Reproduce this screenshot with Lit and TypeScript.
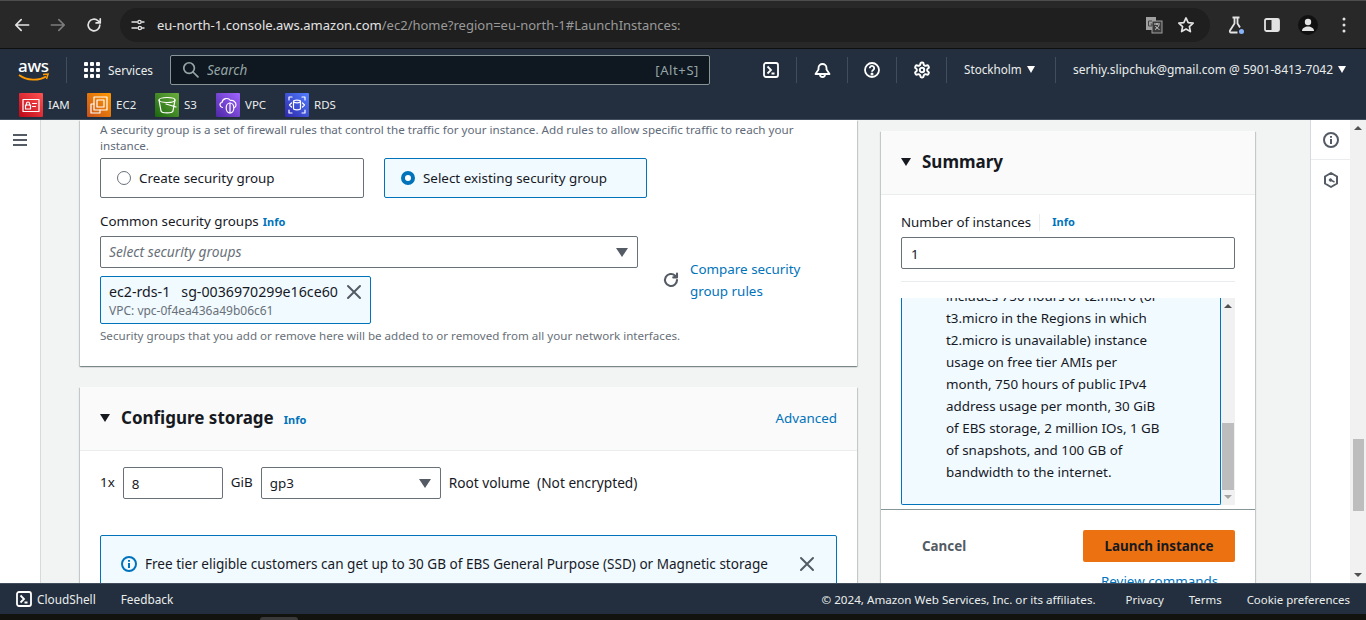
import { LitElement, html, css, svg } from 'lit';
import { customElement } from 'lit/decorators.js';

const stroke = (w: number, size: number, body: unknown, box = 24) => html`<svg
  width=${size}
  height=${size}
  viewBox="0 0 ${box} ${box}"
  fill="none"
  stroke="currentColor"
  stroke-width=${w}
  stroke-linecap="round"
  stroke-linejoin="round"
>${body}</svg>`;

const closeIcon = stroke(2, 16, svg`<path d="M2 2l12 12M14 2L2 14" />`, 16);
const caret = html`<span class="caret"></span>`;

const favourites = [
  {
    name: 'IAM',
    tone: 'iam',
    width: 68,
    icon: svg`<rect x="4" y="6.5" width="16" height="12" /><rect x="6.500" y="12" width="5" height="4" /><path d="M7.500 12v-1.500a1.500 1.500 0 0 1 3 0V12M13.500 10.500h4M13.500 13.500h3" />`,
  },
  {
    name: 'EC2',
    tone: 'ec2',
    width: 68,
    icon: svg`<rect x="7" y="4" width="13" height="13" /><rect x="10" y="7" width="7" height="7" /><path d="M7 11H4v9h9v-3" />`,
  },
  {
    name: 'S3',
    tone: 's3',
    width: 61,
    icon: svg`<ellipse cx="12" cy="7" rx="8" ry="2.500" /><path d="M4 7l2 11c1 2.500 11 2.500 12 0l2-11M11 11l10 3" />`,
  },
  {
    name: 'VPC',
    tone: 'vpc',
    width: 69,
    icon: svg`<path d="M6.500 14.500C3.500 14 3 10 6 9.500 6.500 5.500 12 4 14.500 7.500c3-.5 5.500 1.500 5.500 4.500 0 1-.5 2-1.500 2.500" /><ellipse cx="14" cy="15" rx="3.800" ry="5" /><path d="M14 10v10" />`,
  },
  {
    name: 'RDS',
    tone: 'rds',
    width: 60,
    icon: svg`<path d="M4 7V4h3M17 4h3v3M4 17v3h3M20 17v3h-3M6.500 10l-2 2 2 2M17.500 10l2 2-2 2" /><ellipse cx="12" cy="8.500" rx="3.500" ry="1.300" /><path d="M8.500 8.500v7c0 1.700 7 1.700 7 0v-7" />`,
  },
];

@customElement('app-root')
export class AppRoot extends LitElement {
  static styles = css`
    :host {
      display: block;
      width: 100%;
      height: 620px;
      overflow: hidden;
      font-family: 'Noto Sans', sans-serif;
      color: #16191f;
    }

    svg {
      display: block;
      flex: none;
    }

    a {
      color: #0073bb;
      text-decoration: none;
    }

    .page {
      display: flex;
      flex-direction: column;
      height: 620px;
    }

    /* browser toolbar */
    .chrome {
      flex: none;
      height: 47px;
      display: flex;
      align-items: center;
      background: #282828;
      border-top: 1px solid #4d4d4d;
      border-bottom: 1px solid #0f0f0f;
      color: #e3e3e3;
    }

    .chrome-nav {
      display: flex;
      gap: 16px;
      padding-left: 12px;
      width: 120px;
      box-sizing: border-box;
    }

    .dim {
      color: #7c7c7c;
    }

    .omnibox {
      width: 1090px;
      height: 34px;
      border-radius: 17px;
      background: #1f1f1f;
      display: flex;
      align-items: center;
      padding: 0 8px 0 9px;
      box-sizing: border-box;
    }

    .url {
      margin-left: 10px;
      font-size: 13px;
      color: #e3e3e3;
      flex: 1;
    }

    .url span {
      color: #9a9a9a;
    }

    .omni-icons {
      display: flex;
      gap: 13px;
      align-items: center;
      padding-right: 6px;
    }

    .chrome-right {
      display: grid;
      grid-template-columns: repeat(4, 36px);
      justify-items: center;
      align-items: center;
      margin-left: 8px;
    }

    .avatar {
      width: 20px;
      height: 20px;
      border-radius: 50%;
      background: #111;
      display: flex;
      align-items: center;
      justify-content: center;
    }

    /* console nav */
    .nav {
      flex: none;
      height: 71px;
      background: #232f3e;
      border-bottom: 1px solid #414d5c;
      box-sizing: border-box;
      color: #eaeded;
      font-size: 11.800px;
    }

    .nav-top {
      height: 41px;
      display: flex;
      align-items: center;
    }

    .logo {
      width: 48px;
      margin-left: 18px;
      height: 28px;
    }

    .logo b {
      font-size: 17px;
      font-weight: 500;
      line-height: 19px;
      color: #fff;
      display: block;
      letter-spacing: -0.3px;
    }

    .logo svg {
      margin-top: -2px;
    }

    .vline {
      width: 1px;
      height: 26px;
      background: #414d5c;
      flex: none;
    }

    .services {
      display: flex;
      align-items: center;
      gap: 8px;
      margin-left: 17px;
      width: 86px;
    }

    .grid {
      display: grid;
      grid-template-columns: repeat(3, 4px);
      gap: 2px;
    }

    .grid i {
      width: 4px;
      height: 4px;
      background: #fff;
      border-radius: 1px;
    }

    .search {
      width: 540px;
      height: 30px;
      box-sizing: border-box;
      border: 1px solid #879596;
      border-radius: 2px;
      background: #0f1720;
      display: flex;
      align-items: center;
      padding: 0 10px 0 11px;
      gap: 8px;
      font-size: 13.500px;
      color: #95a5a6;
    }

    .search em {
      flex: 1;
    }

    .search span {
      font-size: 13px;
      letter-spacing: 0.6px;
    }

    .nav-icons {
      display: flex;
      align-items: center;
      margin-left: 36px;
    }

    .nav-icon {
      width: 50px;
      display: flex;
      justify-content: center;
    }

    .nav-icon.w48 {
      width: 48px;
    }

    .nav-icon.w49 {
      width: 49px;
    }

    .menu {
      display: flex;
      align-items: center;
      gap: 5px;
      padding-bottom: 1px;
    }

    .region {
      margin-left: 17px;
      width: 91px;
      font-size: 11.700px;
    }

    .account {
      margin-left: 17px;
      font-size: 12px;
      white-space: nowrap;
    }

    .tri {
      width: 0;
      height: 0;
      border-left: 4.500px solid transparent;
      border-right: 4.500px solid transparent;
      border-top: 7px solid #fff;
    }

    .favs {
      display: flex;
      align-items: center;
      padding-left: 19px;
      height: 29px;
      font-size: 11.500px;
    }

    .fav {
      display: flex;
      align-items: center;
      gap: 5px;
    }

    .fav-icon {
      width: 24px;
      height: 24px;
      color: #fff;
      border-radius: 1px;
    }

    .iam { background: linear-gradient(45deg, #bd0816, #ff5252); }
    .ec2 { background: linear-gradient(45deg, #c8511b, #ff9900); }
    .s3 { background: linear-gradient(45deg, #1b660f, #6cae3e); }
    .vpc { background: linear-gradient(45deg, #4d27a8, #a166ff); }
    .rds { background: linear-gradient(45deg, #2e27ad, #527fff); }

    /* console body */
    .body {
      flex: 1;
      min-height: 0;
      display: flex;
      overflow: hidden;
      background: #f2f3f3;
    }

    .sidenav {
      width: 41px;
      flex: none;
      box-sizing: border-box;
      background: #fff;
      border-right: 1px solid #d5dbdb;
      padding: 14px 0 0 13px;
      color: #545b64;
    }

    .main {
      flex: 1;
      min-width: 0;
      display: flex;
      gap: 24px;
      padding-left: 39px;
      align-items: flex-start;
    }

    .col-left {
      width: 777px;
      flex: none;
    }

    .card {
      background: #fff;
      box-shadow: 0 1px 1px 0 rgba(0, 28, 36, 0.3), 1px 1px 1px 0 rgba(0, 28, 36, 0.15),
        -1px 1px 1px 0 rgba(0, 28, 36, 0.15);
    }

    .sg-card {
      height: 246px;
      box-sizing: border-box;
      padding: 2px 20px 0;
    }

    .lead {
      margin: 0;
      font-size: 11.650px;
      line-height: 16px;
      color: #5f6b7a;
      width: 720px;
    }

    .radios {
      display: flex;
      gap: 20px;
      margin-top: 4px;
    }

    .radio {
      width: 264px;
      height: 40px;
      box-sizing: border-box;
      border: 1px solid #687078;
      border-radius: 2px;
      display: flex;
      align-items: center;
      padding-left: 16px;
      gap: 8px;
      font-size: 13.400px;
    }

    .radio.on {
      width: 263px;
      border-color: #0073bb;
      background: #f1faff;
    }

    .dot {
      width: 14px;
      height: 14px;
      box-sizing: border-box;
      border-radius: 50%;
      border: 1px solid #687078;
      background: #fff;
    }

    .on .dot {
      border: 4px solid #0073bb;
    }

    .label {
      margin-top: 14px;
      font-size: 13.400px;
      line-height: 18px;
      display: flex;
      gap: 4px;
      align-items: baseline;
    }

    .info {
      font-size: 11px;
      font-weight: 700;
      color: #0073bb;
    }

    .sg-row {
      display: flex;
    }

    .sg-pick {
      width: 538px;
      flex: none;
    }

    .select {
      box-sizing: border-box;
      border: 1px solid #687078;
      border-radius: 2px;
      background: #fff;
      display: flex;
      align-items: center;
      justify-content: space-between;
      font-size: 13.400px;
      padding: 0 9px 0 8px;
    }

    .sg-select {
      height: 32px;
      margin-top: 5px;
    }

    .sg-select em {
      color: #687078;
      font-size: 13.800px;
      margin-bottom: 1px;
    }

    .caret {
      width: 0;
      height: 0;
      border-left: 6px solid transparent;
      border-right: 6px solid transparent;
      border-top: 9px solid #545b64;
    }

    .token {
      width: 271px;
      height: 48px;
      box-sizing: border-box;
      margin-top: 8px;
      border: 1px solid #0073bb;
      border-radius: 2px;
      background: #f1faff;
      padding: 5px 8px 0;
    }

    .token-top {
      display: flex;
      align-items: center;
      justify-content: space-between;
      font-size: 14.200px;
      line-height: 20px;
      color: #545b64;
    }

    .token-top span {
      color: #16191f;
      white-space: pre;
    }

    .token small {
      display: block;
      font-size: 12px;
      line-height: 16px;
      margin-top: 1px;
      color: #687078;
    }

    .compare {
      display: flex;
      align-items: center;
      align-self: flex-start;
      gap: 10px;
      margin: 27px 0 0 24px;
      font-size: 13.400px;
      line-height: 22px;
      color: #545b64;
    }

    .compare a {
      width: 125px;
    }

    .hint {
      margin: 4px 0 0;
      font-size: 11.600px;
      line-height: 16px;
      color: #687078;
    }

    .storage {
      margin-top: 21px;
      height: 400px;
    }

    .card-head {
      height: 64px;
      box-sizing: border-box;
      background: #fafafa;
      border-bottom: 1px solid #eaeded;
      display: flex;
      align-items: center;
      padding: 0 20px 2px;
    }

    .head-tri {
      width: 0;
      height: 0;
      border-left: 5.500px solid transparent;
      border-right: 5.500px solid transparent;
      border-top: 8px solid #16191f;
      margin-right: 11px;
    }

    .card-head h2 {
      margin: 0;
      font-size: 17px;
      font-weight: 700;
      line-height: 24px;
    }

    .card-head .info {
      margin-left: 10px;
      align-self: center;
      margin-top: 4px;
    }

    .card-head a {
      margin-left: auto;
      font-size: 13.400px;
    }

    .vol-row {
      display: flex;
      align-items: center;
      gap: 8px;
      margin: 16px 20px 0;
      font-size: 13.400px;
      height: 32px;
    }

    .vol-row > span {
      margin-bottom: 2px;
    }

    .vol-size {
      width: 100px;
      height: 32px;
      box-sizing: border-box;
      border: 1px solid #687078;
      border-radius: 2px;
      padding: 4px 8px 0;
      line-height: 24px;
    }

    .vol-type {
      width: 180px;
      height: 32px;
    }

    .vol-note {
      white-space: pre;
      font-size: 13.700px;
    }

    .alert {
      margin: 36px 20px 0;
      height: 120px;
      box-sizing: border-box;
      border: 1px solid #0073bb;
      border-radius: 2px;
      background: #f1faff;
      display: flex;
      align-items: flex-start;
      padding: 19px 21px 0 20px;
      font-size: 13.550px;
      line-height: 18px;
      gap: 8px;
    }

    .alert-icon {
      color: #0073bb;
      margin-top: 1px;
    }

    .alert-text {
      flex: 1;
      white-space: nowrap;
    }

    .alert-close {
      color: #545b64;
      margin-top: 1px;
    }

    /* summary */
    .summary {
      width: 374px;
      flex: none;
      margin-top: 11px;
      height: 470px;
    }

    .summary-body {
      padding: 0 20px;
    }

    .count-label {
      display: flex;
      align-items: center;
      margin-top: 18px;
      font-size: 13.300px;
      line-height: 18px;
    }

    .count-label i {
      width: 1px;
      height: 17px;
      background: #eaeded;
      margin: 0 8px;
    }

    .count-label .info {
      margin-left: 4px;
    }

    .count {
      margin-top: 6px;
      height: 32px;
      box-sizing: border-box;
      border: 1px solid #687078;
      border-radius: 2px;
      padding: 4px 9px 0;
      font-size: 13.400px;
      line-height: 24px;
    }

    .summary hr {
      border: 0;
      border-top: 1px solid #eaeded;
      margin: 12px 0 16px;
    }

    .free-tier {
      display: flex;
      height: 207px;
    }

    .free-box {
      width: 320px;
      box-sizing: border-box;
      background: #f1faff;
      border: 1px solid #0073bb;
      border-top: 0;
      border-radius: 0 0 2px 2px;
      overflow: hidden;
      padding: 0 57px 0 44px;
      font-size: 13.400px;
      line-height: 22px;
    }

    .free-box p {
      margin: -13px 0 0;
    }

    .scrollbar {
      flex: none;
      background: #f1f1f1;
      display: flex;
      flex-direction: column;
      align-items: center;
    }

    .free-tier .scrollbar {
      width: 14px;
    }

    .sb-up,
    .sb-down {
      width: 0;
      height: 0;
      border-left: 4px solid transparent;
      border-right: 4px solid transparent;
    }

    .sb-up {
      border-bottom: 4px solid #505050;
    }

    .sb-down {
      border-top: 4px solid #505050;
    }

    .free-tier .sb-up {
      margin-top: 6px;
    }

    .free-tier .thumb {
      width: 12px;
      height: 67px;
      margin-top: 115px;
      background: #bdbdbd;
    }

    .free-tier .sb-down {
      margin-top: 5px;
      border-top-color: #a3a3a3;
    }

    .summary-foot {
      margin-top: 4px;
      border-top: 1px solid #879596;
      padding: 20px 20px 0;
    }

    .actions {
      display: flex;
      align-items: center;
      justify-content: space-between;
    }

    .cancel {
      font-size: 13.400px;
      font-weight: 700;
      color: #545b64;
      margin-left: 21px;
    }

    .launch {
      width: 152px;
      height: 32px;
      border-radius: 2px;
      background: #ec7211;
      display: flex;
      align-items: center;
      justify-content: center;
      font-size: 13.400px;
      font-weight: 700;
    }

    .review {
      display: block;
      margin: 10px 0 0 200px;
      font-size: 13.400px;
      line-height: 18px;
      white-space: nowrap;
    }

    /* right rail */
    .rail {
      width: 40px;
      flex: none;
      box-sizing: border-box;
      background: #fff;
      border-left: 1px solid #d5dbdb;
      color: #545b64;
    }

    .rail-item {
      height: 40px;
      display: flex;
      justify-content: center;
      align-items: center;
      box-sizing: border-box;
    }

    .rail-item:first-child {
      border-bottom: 1px solid #eaeded;
    }

    .page-scroll {
      width: 16px;
    }

    .page-scroll .sb-up {
      margin-top: 6px;
    }

    .page-scroll .thumb {
      width: 11px;
      height: 72px;
      margin-top: 309px;
      background: #bdbdbd;
    }

    .page-scroll .sb-down {
      margin-top: 62px;
    }

    /* footer */
    .footer {
      flex: none;
      height: 31px;
      box-sizing: border-box;
      background: #232f3e;
      border-top: 1px solid #414d5c;
      color: #eaeded;
      display: flex;
      align-items: center;
      font-size: 11.800px;
      padding: 0 16px;
    }

    .shell {
      display: flex;
      align-items: center;
      gap: 5px;
      margin-right: 25px;
    }

    .foot-links {
      margin-left: auto;
      display: flex;
      gap: 25px;
      font-size: 11.450px;
    }

    .foot-links span:first-child {
      margin-right: 5px;
      font-size: 11.650px;
    }

    .taskbar {
      flex: none;
      height: 6px;
      background: #12120f;
    }

    .taskbar i {
      display: block;
      width: 38px;
      height: 3px;
      margin-left: 260px;
      position: relative;
      top: 3px;
      border-radius: 6px 6px 0 0;
      background: #3a3a3a;
    }
  `;

  private renderChrome() {
    return html`
      <div class="chrome">
        <div class="chrome-nav">
          ${stroke(2, 20, svg`<path d="M20 12H5M11 5.500L4.500 12l6.500 6.500" />`)}
          <span class="dim">${stroke(2, 20, svg`<path d="M4 12h15M13 5.500l6.500 6.500-6.500 6.500" />`)}</span>
          ${stroke(2, 20, svg`<path d="M19 12a7 7 0 1 1-2.200-5.100L19.500 9.500M19.500 4.500v5h-5" />`)}
        </div>
        <div class="omnibox">
          ${stroke(1.800, 18, svg`<path d="M4 8h7M4 16h7M17 8h3M18 16h2" /><circle cx="14" cy="8" r="2.200" /><circle cx="14.500" cy="16" r="2.200" />`)}
          <div class="url">eu-north-1.console.aws.amazon.com<span>/ec2/home?region=eu-north-1#LaunchInstances:</span></div>
          <div class="omni-icons">
            <svg width="18" height="18" viewBox="0 0 18 18">
              <rect x="1" y="1" width="10" height="13" fill="#a0a0a0" />
              <rect x="7" y="5" width="10" height="12" fill="#3a3a3a" stroke="#a0a0a0" />
              <path d="M9 8h6M12 7v2M14 9c-.5 2-2 3.500-4 4.500M10.500 10c.8 1.500 2.500 3 4 3.500" stroke="#d0d0d0" fill="none" />
              <path d="M7 5H3.500v5H7V8H5.500" stroke="#444" fill="none" />
            </svg>
            ${stroke(2, 20, svg`<path d="M12 3.500l2.600 5.600 6 .7-4.500 4.100 1.200 6-5.300-3-5.300 3 1.200-6-4.500-4.100 6-.7z" />`)}
          </div>
        </div>
        <div class="chrome-right">
          <svg width="20" height="20" viewBox="0 0 20 20" fill="none" stroke="#e3e3e3" stroke-width="1.800">
            <path d="M6.500 2.500h7M8.500 3v5.500L4 15.500c-.5.900 0 2 1 2h6.500M11.500 3v5.500l2.500 4" />
            <circle cx="15.500" cy="16.500" r="2.500" fill="#8ab4f8" stroke="none" />
          </svg>
          <svg width="18" height="18" viewBox="0 0 18 18">
            <rect x="2" y="3" width="14" height="12" rx="1.500" fill="none" stroke="#e3e3e3" stroke-width="1.800" />
            <rect x="8.500" y="3" width="7.500" height="12" fill="#e3e3e3" />
          </svg>
          <span class="avatar">
            <svg width="16" height="16" viewBox="0 0 16 16" fill="#e3e3e3">
              <circle cx="8" cy="5" r="3.200" />
              <path d="M2 14c0-3 3-4.500 6-4.500s6 1.500 6 4.500z" />
            </svg>
          </span>
          <svg width="4" height="16" viewBox="0 0 4 16" fill="#e3e3e3">
            <circle cx="2" cy="2" r="1.500" />
            <circle cx="2" cy="8" r="1.500" />
            <circle cx="2" cy="14" r="1.500" />
          </svg>
        </div>
      </div>
    `;
  }

  private renderNav() {
    return html`
      <div class="nav">
        <div class="nav-top">
          <div class="logo">
            <b>aws</b>
            <svg width="32" height="9" viewBox="0 0 32 9" fill="none">
              <path d="M1 2c8 6 20 6 27 1.500" stroke="#ff9900" stroke-width="1.800" />
              <path d="M25 1.500l5-.5-1.500 5" stroke="#ff9900" stroke-width="1.500" />
            </svg>
          </div>
          <span class="vline"></span>
          <div class="services">
            <span class="grid">${Array.from({ length: 9 }, () => html`<i></i>`)}</span>
            <span>Services</span>
          </div>
          <div class="search">
            ${stroke(2.400, 17, svg`<circle cx="10" cy="10" r="7.500" /><path d="M15.500 15.500l7 7" />`)}
            <em>Search</em>
            <span>[Alt+S]</span>
          </div>
          <div class="nav-icons">
            <div class="nav-icon">
              <svg width="16" height="16" viewBox="0 0 16 16" fill="none" stroke="#fff" stroke-width="1.800">
                <rect x="1" y="1" width="14" height="14" rx="2" />
                <path d="M4.500 4.500L8 8l-3.500 3.500M8.500 11.500h3" />
              </svg>
            </div>
            <span class="vline"></span>
            <div class="nav-icon">
              <svg width="17" height="16" viewBox="0 0 17 16" fill="none" stroke="#fff" stroke-width="1.800" stroke-linejoin="round">
                <path d="M1.500 12h14L12.500 7.500V6a4 4 0 0 0-8 0v1.500z" />
                <path d="M6 12.500a2.500 2.500 0 0 0 5 0" />
              </svg>
            </div>
            <span class="vline"></span>
            <div class="nav-icon w48">
              <svg width="16" height="16" viewBox="0 0 16 16" fill="none" stroke="#fff" stroke-width="1.800">
                <circle cx="8" cy="8" r="7" />
                <path d="M5.800 6.200a2.200 2.200 0 1 1 3.400 1.800C8.400 8.500 8 9 8 9.800" />
                <circle cx="8" cy="12" r=".6" fill="#fff" />
              </svg>
            </div>
            <span class="vline"></span>
            <div class="nav-icon w49">
              <svg width="18" height="18" viewBox="0 0 24 24" fill="none" stroke="#fff" stroke-width="2.600" stroke-linejoin="round">
                <path d="M12.220 2h-.44a2 2 0 0 0-2 2v.18a2 2 0 0 1-1 1.730l-.43.250a2 2 0 0 1-2 0l-.15-.08a2 2 0 0 0-2.730.730l-.22.380a2 2 0 0 0 .730 2.730l.15.100a2 2 0 0 1 1 1.720v.510a2 2 0 0 1-1 1.740l-.15.090a2 2 0 0 0-.730 2.730l.22.380a2 2 0 0 0 2.730.730l.15-.08a2 2 0 0 1 2 0l.43.250a2 2 0 0 1 1 1.730V20a2 2 0 0 0 2 2h.44a2 2 0 0 0 2-2v-.18a2 2 0 0 1 1-1.730l.43-.250a2 2 0 0 1 2 0l.15.080a2 2 0 0 0 2.730-.730l.22-.390a2 2 0 0 0-.730-2.730l-.15-.080a2 2 0 0 1-1-1.740v-.500a2 2 0 0 1 1-1.740l.15-.090a2 2 0 0 0 .730-2.730l-.22-.380a2 2 0 0 0-2.730-.730l-.15.080a2 2 0 0 1-2 0l-.43-.250a2 2 0 0 1-1-1.730V4a2 2 0 0 0-2-2z" />
                <circle cx="12" cy="12" r="3" />
              </svg>
            </div>
            <span class="vline"></span>
            <div class="menu region"><span>Stockholm</span><span class="tri"></span></div>
            <span class="vline"></span>
            <div class="menu account"><span>serhiy.slipchuk@gmail.com @ 5901-8413-7042</span><span class="tri"></span></div>
          </div>
        </div>
        <div class="favs">
          ${favourites.map(
            (f) => html`
              <div class="fav" style="width:${f.width}px">
                <span class="fav-icon ${f.tone}">${stroke(1.200, 24, f.icon)}</span>
                <span>${f.name}</span>
              </div>
            `
          )}
        </div>
      </div>
    `;
  }

  private renderSecurityCard() {
    return html`
      <section class="card sg-card">
        <p class="lead">
          A security group is a set of firewall rules that control the traffic for your instance. Add rules to allow
          specific traffic to reach your instance.
        </p>
        <div class="radios">
          <div class="radio"><span class="dot"></span>Create security group</div>
          <div class="radio on"><span class="dot"></span>Select existing security group</div>
        </div>
        <div class="label">Common security groups <span class="info">Info</span></div>
        <div class="sg-row">
          <div class="sg-pick">
            <div class="select sg-select"><em>Select security groups</em>${caret}</div>
            <div class="token">
              <div class="token-top">
                <span>ec2-rds-1   sg-0036970299e16ce60</span>
                ${closeIcon}
              </div>
              <small>VPC: vpc-0f4ea436a49b06c61</small>
            </div>
          </div>
          <div class="compare">
            ${stroke(2.800, 18, svg`<path d="M20 12a8 8 0 1 1-2.500-5.800L20 8.500M20 3.500v5h-5" />`)}
            <a>Compare security group rules</a>
          </div>
        </div>
        <p class="hint">Security groups that you add or remove here will be added to or removed from all your network interfaces.</p>
      </section>
    `;
  }

  private renderStorageCard() {
    return html`
      <section class="card storage">
        <div class="card-head">
          <span class="head-tri"></span>
          <h2>Configure storage</h2>
          <span class="info">Info</span>
          <a>Advanced</a>
        </div>
        <div class="vol-row">
          <span>1x</span>
          <div class="vol-size">8</div>
          <span>GiB</span>
          <div class="select vol-type">gp3${caret}</div>
          <span class="vol-note">Root volume  (Not encrypted)</span>
        </div>
        <div class="alert">
          <span class="alert-icon">
            <svg width="16" height="16" viewBox="0 0 16 16" fill="none" stroke="currentColor" stroke-width="2">
              <circle cx="8" cy="8" r="7" />
              <path d="M8 7v5M8 4v1.800" />
            </svg>
          </span>
          <span class="alert-text">Free tier eligible customers can get up to 30 GB of EBS General Purpose (SSD) or Magnetic storage</span>
          <span class="alert-close">${closeIcon}</span>
        </div>
      </section>
    `;
  }

  private renderSummary() {
    return html`
      <aside class="card summary">
        <div class="card-head">
          <span class="head-tri"></span>
          <h2>Summary</h2>
        </div>
        <div class="summary-body">
          <div class="count-label">Number of instances<i></i><span class="info">Info</span></div>
          <div class="count">1</div>
          <hr />
          <div class="free-tier">
            <div class="free-box">
              <p>
                includes 750 hours of t2.micro (or t3.micro in the Regions in which t2.micro is unavailable) instance
                usage on free tier AMIs per month, 750 hours of public IPv4 address usage per month, 30 GiB of EBS
                storage, 2 million IOs, 1 GB of snapshots, and 100 GB of bandwidth to the internet.
              </p>
            </div>
            <div class="scrollbar">
              <span class="sb-up"></span>
              <span class="thumb"></span>
              <span class="sb-down"></span>
            </div>
          </div>
        </div>
        <div class="summary-foot">
          <div class="actions">
            <span class="cancel">Cancel</span>
            <span class="launch">Launch instance</span>
          </div>
          <a class="review">Review commands</a>
        </div>
      </aside>
    `;
  }

  render() {
    return html`
      <div class="page">
        ${this.renderChrome()} ${this.renderNav()}
        <div class="body">
          <div class="sidenav">
            <svg width="15" height="13" viewBox="0 0 15 13" fill="currentColor">
              <rect y="0" width="14" height="2" />
              <rect y="5" width="14" height="2" />
              <rect y="10" width="14" height="2" />
            </svg>
          </div>
          <div class="main">
            <div class="col-left">${this.renderSecurityCard()} ${this.renderStorageCard()}</div>
            ${this.renderSummary()}
          </div>
          <div class="rail">
            <div class="rail-item">
              <svg width="16" height="16" viewBox="0 0 16 16" fill="none" stroke="currentColor" stroke-width="2">
                <circle cx="8" cy="8" r="7" />
                <path d="M8 7v5M8 4v1.800" />
              </svg>
            </div>
            <div class="rail-item">
              <svg width="16" height="16" viewBox="0 0 16 16" fill="none" stroke="currentColor" stroke-width="2" stroke-linejoin="round">
                <path d="M8 1l6 3.500v7L8 15l-6-3.500v-7z" />
                <circle cx="7.500" cy="8" r="1.300" fill="currentColor" stroke-width="1" />
                <path d="M8.500 8.500l3 1.500" stroke-width="1.500" />
              </svg>
            </div>
          </div>
          <div class="scrollbar page-scroll">
            <span class="sb-up"></span>
            <span class="thumb"></span>
            <span class="sb-down"></span>
          </div>
        </div>
        <div class="footer">
          <div class="shell">
            <svg width="16" height="16" viewBox="0 0 16 16" fill="none" stroke="#fff" stroke-width="1.800">
              <rect x="1" y="1" width="14" height="14" rx="2" />
              <path d="M4.500 4.500L8 8l-3.500 3.500M8.500 11.500h3" />
            </svg>
            <span>CloudShell</span>
          </div>
          <span>Feedback</span>
          <div class="foot-links">
            <span>© 2024, Amazon Web Services, Inc. or its affiliates.</span>
            <span>Privacy</span>
            <span>Terms</span>
            <span>Cookie preferences</span>
          </div>
        </div>
        <div class="taskbar"><i></i></div>
      </div>
    `;
  }
}

declare global {
  interface HTMLElementTagNameMap {
    'app-root': AppRoot;
  }
}
